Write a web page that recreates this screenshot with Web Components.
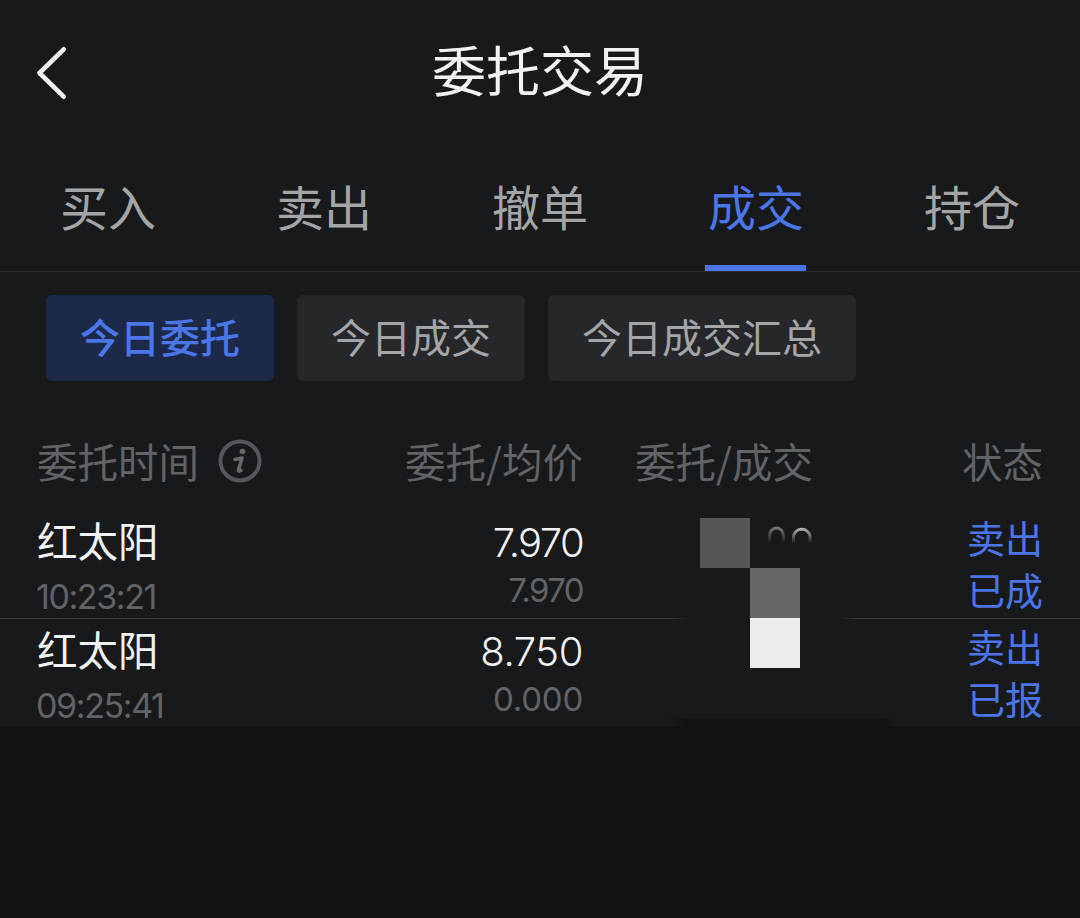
<!DOCTYPE html>
<html lang="zh">
<head>
<meta charset="utf-8">
<title>委托交易</title>
<style>
  html, body { margin: 0; height: 100%; background: #111214; }
  body { font-family: "Noto Sans CJK SC", sans-serif; overflow: hidden; }
  trade-page { width: 1080px; height: 918px; }
</style>
</head>
<body>
<trade-page>
  <nav-header title="委托交易"></nav-header>
  <tab-bar tabs="买入,卖出,撤单,成交,持仓" active="3"></tab-bar>
  <chip-row>
    <filter-chip active>今日委托</filter-chip>
    <filter-chip>今日成交</filter-chip>
    <filter-chip>今日成交汇总</filter-chip>
  </chip-row>
  <order-table>
    <order-row name="红太阳" time="10:23:21" price="7.970" avg="7.970" side="卖出" state="已成" tight></order-row>
    <order-row name="红太阳" time="09:25:41" price="8.750" avg="0.000" side="卖出" state="已报"></order-row>
  </order-table>
</trade-page>

<script>
/**
 * Page shell: the lit part on top, the empty darker part below.
 */
class TradePage extends HTMLElement {
  constructor() {
    super();
    this.attachShadow({ mode: 'open' });
    this.shadowRoot.innerHTML = `
      <style>
        :host { display: block; background: #111214; }
        .lit { background: #18191b; height: 727px; display: flex; flex-direction: column; }
      </style>
      <div class="lit"><slot></slot></div>
    `;
  }
}
customElements.define('trade-page', TradePage);

class NavHeader extends HTMLElement {
  constructor() {
    super();
    this.attachShadow({ mode: 'open' });
  }

  connectedCallback() {
    this.shadowRoot.innerHTML = `
      <style>
        :host { display: block; flex: none; height: 145px; }
        .bar {
          display: grid;
          grid-template-columns: 120px 1fr 120px;
          align-items: center;
          padding-top: 19px;
        }
        svg { display: block; margin: 6px 0 0 36px; }
        h1 {
          margin: 0;
          text-align: center;
          color: #f2f2f2;
          font-size: 54px;
          font-weight: 400;
          line-height: 100px;
        }
      </style>
      <div class="bar">
        <svg width="32" height="56" viewBox="0 0 32 56" fill="none">
          <path d="M27.7 5.3 L3.5 29 L27.7 52.7" stroke="#f0f0f0" stroke-width="4.6" stroke-linecap="round" stroke-linejoin="round"/>
        </svg>
        <h1>${this.getAttribute('title')}</h1>
        <span></span>
      </div>
    `;
  }
}
customElements.define('nav-header', NavHeader);

class TabBar extends HTMLElement {
  constructor() {
    super();
    this.attachShadow({ mode: 'open' });
  }

  connectedCallback() {
    const tabs = this.getAttribute('tabs').split(',');
    const active = parseInt(this.getAttribute('active')) || 0;
    this.shadowRoot.innerHTML = `
      <style>
        :host {
          display: grid;
          flex: none;
          grid-template-columns: repeat(5, 216px);
          border-bottom: 1px solid #2b2c2f;
          box-sizing: border-box;
          height: 127px;
        }
        .tab {
          display: flex;
          flex-direction: column;
          align-items: center;
          justify-content: flex-end;
          color: #a4a5a7;
          font-size: 48px;
          line-height: 66px;
        }
        .label { padding-bottom: 33px; }
        .on { color: #4a76e8; }
        .on .label { padding-bottom: 27px; }
        .line { width: 101px; height: 6px; margin-left: -1px; background: #4a76e8; }
      </style>
      ${tabs.map((t, i) => `
        <div class="tab ${i === active ? 'on' : ''}">
          <span class="label">${t}</span>
          ${i === active ? '<span class="line"></span>' : ''}
        </div>
      `).join('')}
    `;
  }
}
customElements.define('tab-bar', TabBar);

class ChipRow extends HTMLElement {
  constructor() {
    super();
    this.attachShadow({ mode: 'open' });
    this.shadowRoot.innerHTML = `
      <style>
        :host { display: flex; flex: none; gap: 23px; padding: 23px 0 0 46px; }
      </style>
      <slot></slot>
    `;
  }
}
customElements.define('chip-row', ChipRow);

class FilterChip extends HTMLElement {
  constructor() {
    super();
    this.attachShadow({ mode: 'open' });
    this.shadowRoot.innerHTML = `
      <style>
        :host {
          display: block;
          box-sizing: border-box;
          height: 86px;
          line-height: 82px;
          padding: 0 34px 4px;
          border-radius: 6px;
          background: #26272b;
          color: #a4a5a7;
          font-size: 40px;
        }
        :host([active]) { background: #1c2948; color: #4a76e8; font-weight: 500; }
      </style>
      <slot></slot>
    `;
  }
}
customElements.define('filter-chip', FilterChip);

/**
 * Table head, rows and the pixelated patch that hides the quantity column.
 */
class OrderTable extends HTMLElement {
  constructor() {
    super();
    this.attachShadow({ mode: 'open' });
    this.shadowRoot.innerHTML = `
      <style>
        :host { display: block; position: relative; flex: 1 1 0; min-height: 0; }
        .head {
          display: grid;
          grid-template-columns: 300px 246px 1fr auto;
          align-items: center;
          padding: 52px 37px 0;
          height: 129px;
          box-sizing: border-box;
          grid-auto-rows: 56px;
          color: #626366;
          font-size: 40.5px;
          line-height: 56px;
        }
        .head > span { white-space: nowrap; }
        .first { display: flex; align-items: center; gap: 19px; }
        .price { text-align: right; }
        .qty { padding-left: 52px; }
        svg { display: block; }
        .patch {
          position: absolute;
          left: 680px;
          top: 0;
          width: 210px;
          height: 100%;
          pointer-events: none;
        }
        .mask {
          position: absolute;
          left: -10px;
          width: 190px;
          top: 232px;
          height: 12px;
          background: linear-gradient(90deg, transparent, #18191b 20px, #18191b 170px, transparent);
        }
        .foot {
          position: absolute;
          left: -10px;
          right: -6px;
          bottom: 0;
          height: 9px;
          background: linear-gradient(90deg, transparent, #111214 14px, #111214 212px, transparent);
        }
        .px { position: absolute; width: 50px; height: 50px; }
        .a { left: 20px; top: 137px; background: #555657; }
        .b { left: 70px; top: 187px; background: #666; }
        .c { left: 70px; top: 237px; background: #ececec; }
        .arcs { position: absolute; left: 85px; top: 144px; }
      </style>
      <div class="head">
        <span class="first">委托时间
          <svg width="44" height="44" viewBox="0 0 44 44">
            <circle cx="22" cy="22" r="19.5" fill="none" stroke="#55565f" stroke-width="4"/>
            <circle cx="24.5" cy="12.5" r="2.8" fill="#67686e"/>
            <path d="M17 20.5 L24 19 L20.5 31 Q20 33 23 31.5" fill="none" stroke="#67686e" stroke-width="3.6" stroke-linecap="round" stroke-linejoin="round"/>
          </svg>
        </span>
        <span class="price">委托/均价</span>
        <span class="qty">委托/成交</span>
        <span>状态</span>
      </div>
      <slot></slot>
      <div class="patch">
        <div class="mask"></div>
        <div class="foot"></div>
        <div class="px a"></div>
        <div class="px b"></div>
        <div class="px c"></div>
        <svg class="arcs" width="50" height="20" viewBox="0 0 50 20" fill="none">
          <defs>
            <linearGradient id="fade1" gradientUnits="userSpaceOnUse" x1="0" y1="2" x2="0" y2="18">
              <stop offset="0" stop-color="#77787a"/><stop offset="1" stop-color="#77787a" stop-opacity="0"/>
            </linearGradient>
            <linearGradient id="fade2" gradientUnits="userSpaceOnUse" x1="0" y1="2" x2="0" y2="18">
              <stop offset="0" stop-color="#c4c4c5"/><stop offset="1" stop-color="#c4c4c5" stop-opacity="0"/>
            </linearGradient>
          </defs>
          <path d="M4.5 18 V11 A7 8 0 0 1 18.5 11 V18" stroke="url(#fade1)" stroke-width="3"/>
          <path d="M28.5 18 V11 A8.5 9 0 0 1 45 11 V18" stroke="url(#fade2)" stroke-width="3"/>
        </svg>
      </div>
    `;
  }
}
customElements.define('order-table', OrderTable);

class OrderRow extends HTMLElement {
  constructor() {
    super();
    this.attachShadow({ mode: 'open' });
  }

  connectedCallback() {
    const get = k => this.getAttribute(k);
    this.shadowRoot.innerHTML = `
      <style>
        :host { display: block; height: 109px; box-sizing: border-box; }
        :host(:not(:last-of-type)) { border-bottom: 1px solid #3a3b3e; }
        .row {
          display: grid;
          grid-template-columns: 300px 246px 1fr auto;
          padding: 3px 37px 0;
        }
        .name { color: #f2f2f2; font-size: 40.5px; line-height: 54px; }
        .time {
          color: #626366;
          font: 34px/54px Inter, "Noto Sans CJK SC", sans-serif;
          letter-spacing: -1.4px;
          margin: 3px 0 0 -1px;
        }
        .nums {
          --spacing: -0.4px;
          --spacing-avg: -0.2px;
          padding-top: 3px;
          text-align: right;
          font-family: Inter, "Noto Sans CJK SC", sans-serif;
        }
        :host([tight]) .nums { --spacing: -1.6px; --spacing-avg: -1.6px; }
        .price { color: #f2f2f2; font-size: 40px; font-weight: 300; line-height: 54px; letter-spacing: var(--spacing); }
        .avg { color: #626366; font-size: 33px; line-height: 54px; margin-top: -7px; letter-spacing: var(--spacing-avg); }
        .side { color: #4a76e8; font-size: 38px; line-height: 52px; margin-top: -2px; text-align: right; }
      </style>
      <div class="row">
        <div>
          <div class="name">${get('name')}</div>
          <div class="time">${get('time')}</div>
        </div>
        <div class="nums">
          <div class="price">${get('price')}</div>
          <div class="avg">${get('avg')}</div>
        </div>
        <div></div>
        <div class="side">${get('side')}<br>${get('state')}</div>
      </div>
    `;
  }
}
customElements.define('order-row', OrderRow);
</script>
</body>
</html>
